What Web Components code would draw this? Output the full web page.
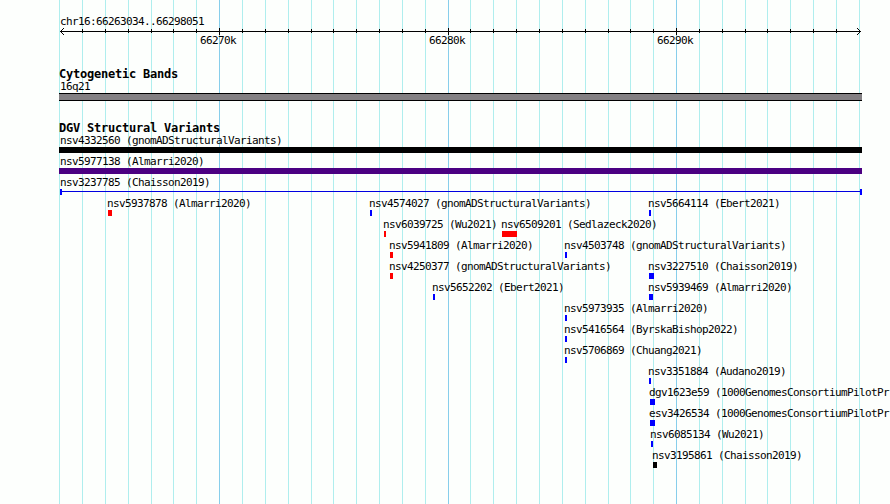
<!DOCTYPE html>
<html lang="en">
<head>
<meta charset="utf-8">
<title>chr16:66263034..66298051</title>
<style>
body {
  margin: 0;
  background: #fdfffd;
  overflow: hidden;
}
</style>
</head>
<body>
<genome-browser>
  <scale-bar region="chr16:66263034..66298051"></scale-bar>
  <genome-track class="bands" name="Cytogenetic Bands"></genome-track>
  <genome-track class="variants" name="DGV Structural Variants"></genome-track>
</genome-browser>

<script>
// Major grid lines and the label under each of them
const MAJOR = { 219: '66270k', 448: '66280k', 676: '66290k' }
const GRID = [59, 82, 105, 128, 151, 173, 196, 219, 242, 265, 288, 311, 333, 356, 379, 402, 425, 448,
  470, 493, 516, 539, 562, 585, 608, 630, 653, 676, 699, 722, 745, 767, 790, 813, 836, 859]

class GenomeBrowser extends HTMLElement {
  constructor () {
    super()
    this.attachShadow({ mode: 'open' })
    const lines = GRID.map(x => `<rect x="${x}" y="0" width="1" height="504" fill="${MAJOR[x] ? '#87ceeb' : '#afeeee'}"/>`)
    this.shadowRoot.innerHTML = `
    <style>
    :host {
      display: block;
      position: relative;
      width: 890px;
      height: 504px;
      overflow: hidden;
      color: #000;
      font: 11px/14px "DejaVu Sans Mono", monospace;
      letter-spacing: -0.622px;
      white-space: nowrap;
    }
    svg {
      position: absolute;
      inset: 0;
    }
    .tracks {
      position: relative;
      display: flex;
      flex-direction: column;
      padding-top: 15px;
    }
    </style>
    <svg width="890" height="504" shape-rendering="crispEdges">${lines.join('')}</svg>
    <div class="tracks"><slot></slot></div>`
  }
}

class ScaleBar extends HTMLElement {
  connectedCallback () {
    this.attachShadow({ mode: 'open' })
    const ticks = GRID.slice(1, -1).map(x => MAJOR[x]
      ? `<rect x="${x}" y="0" width="1" height="7"/>`
      : `<rect x="${x}" y="1" width="1" height="4"/>`)
    const labels = Object.keys(MAJOR).map(x => `<span style="margin-left:${x - 19}px">${MAJOR[x]}</span>`)
    this.shadowRoot.innerHTML = `
    <style>
    :host {
      display: block;
      height: 53px;
    }
    .region {
      height: 13px;
      padding-left: 60px;
    }
    svg {
      display: block;
    }
    .labels {
      display: grid;
      margin-top: -1px;
    }
    .labels span {
      grid-area: 1 / 1;
    }
    </style>
    <div class="region">${this.getAttribute('region')}</div>
    <svg width="890" height="7" shape-rendering="crispEdges">
      <rect x="60" y="3" width="801" height="1"/>
      ${ticks.join('')}
      <path d="M61 2h1v1h-1zM62 1h1v1h-1zM63 0h1v1h-1zM61 4h1v1h-1zM62 5h1v1h-1zM63 6h1v1h-1z"/>
      <path d="M859 2h1v1h-1zM858 1h1v1h-1zM857 0h1v1h-1zM859 4h1v1h-1zM858 5h1v1h-1zM857 6h1v1h-1z"/>
    </svg>
    <div class="labels">${labels.join('')}</div>`
  }
}

class GenomeTrack extends HTMLElement {
  connectedCallback () {
    this.attachShadow({ mode: 'open' })
    this.shadowRoot.innerHTML = `
    <style>
    :host {
      display: block;
    }
    :host(.bands) {
      height: 54px;
    }
    h2 {
      margin: 0 0 0 59px;
      height: 12px;
      font: bold 12px/13px "DejaVu Sans Mono", monospace;
      letter-spacing: -0.224px;
    }
    </style>
    <h2>${this.getAttribute('name')}</h2>
    <slot></slot>`
  }

  /**
   * Adds one line of features under the ones already there.
   * @param {Array} features - [name, start, width, kind, label start]
   */
  addRow (features) {
    const row = document.createElement('feature-row')
    features.forEach(([name, x, width, kind, label]) => {
      const feature = document.createElement('track-feature')
      feature.textContent = name
      feature.className = kind
      feature.style.setProperty('--x', x + 'px')
      feature.style.setProperty('--w', width + 'px')
      feature.style.setProperty('--label', (label || x - 1) + 'px')
      row.appendChild(feature)
    })
    this.appendChild(row)
  }
}

class FeatureRow extends HTMLElement {
  constructor () {
    super()
    this.attachShadow({ mode: 'open' })
    this.shadowRoot.innerHTML = `
    <style>
    :host {
      display: grid;
      height: 21px;
    }
    ::slotted(*) {
      grid-area: 1 / 1;
    }
    </style>
    <slot></slot>`
  }
}

class TrackFeature extends HTMLElement {
  constructor () {
    super()
    this.attachShadow({ mode: 'open' })
    this.shadowRoot.innerHTML = `
    <style>
    :host {
      display: block;
      min-width: 0;
    }
    .label {
      height: 13px;
      padding-left: var(--label);
    }
    .bar {
      box-sizing: border-box;
      width: var(--w);
      height: 6px;
      margin-left: var(--x);
      background: #00f;
    }
    :host(.loss) .bar { background: #f00; }
    :host(.complex) .bar { background: #000; }
    :host(.indigo) .bar { background: #4b0082; }
    :host(.band) .bar {
      height: 8px;
      background: #838083;
      border: solid #000;
      border-width: 1px 0;
    }
    /* thin line closed by a block at both ends */
    :host(.span) .bar {
      border: solid #00f;
      border-width: 0 2px;
      background: linear-gradient(#0000e0, #0000e0) 0 2px / 100% 1px no-repeat;
    }
    </style>
    <div class="label"><slot></slot></div>
    <div class="bar"></div>`
  }
}

window.customElements.define('genome-browser', GenomeBrowser)
window.customElements.define('scale-bar', ScaleBar)
window.customElements.define('genome-track', GenomeTrack)
window.customElements.define('feature-row', FeatureRow)
window.customElements.define('track-feature', TrackFeature)

const bands = document.querySelector('.bands')
bands.addRow([['16q21', 59, 803, 'band', 60]])

const variants = document.querySelector('.variants')
const rows = [
  [['nsv4332560 (gnomADStructuralVariants)', 59, 803, 'complex', 60]],
  [['nsv5977138 (Almarri2020)', 59, 803, 'indigo', 60]],
  [['nsv3237785 (Chaisson2019)', 60, 802, 'span', 60]],
  [
    ['nsv5937878 (Almarri2020)', 108, 4, 'loss'],
    ['nsv4574027 (gnomADStructuralVariants)', 370, 2, 'gain'],
    ['nsv5664114 (Ebert2021)', 649, 2, 'gain']
  ],
  [
    ['nsv6039725 (Wu2021)', 384, 2, 'loss'],
    ['nsv6509201 (Sedlazeck2020)', 502, 15, 'loss']
  ],
  [
    ['nsv5941809 (Almarri2020)', 390, 3, 'loss'],
    ['nsv4503748 (gnomADStructuralVariants)', 565, 2, 'gain']
  ],
  [
    ['nsv4250377 (gnomADStructuralVariants)', 390, 3, 'loss'],
    ['nsv3227510 (Chaisson2019)', 649, 5, 'gain']
  ],
  [
    ['nsv5652202 (Ebert2021)', 433, 2, 'gain'],
    ['nsv5939469 (Almarri2020)', 649, 4, 'gain']
  ],
  [['nsv5973935 (Almarri2020)', 565, 2, 'gain']],
  [['nsv5416564 (ByrskaBishop2022)', 565, 2, 'gain']],
  [['nsv5706869 (Chuang2021)', 565, 2, 'gain']],
  [['nsv3351884 (Audano2019)', 649, 2, 'gain']],
  [['dgv1623e59 (1000GenomesConsortiumPilotPr', 650, 5, 'gain']],
  [['esv3426534 (1000GenomesConsortiumPilotPr', 650, 5, 'gain']],
  [['nsv6085134 (Wu2021)', 651, 2, 'gain']],
  [['nsv3195861 (Chaisson2019)', 653, 4, 'complex']]
]
rows.forEach(row => variants.addRow(row))
</script>
</body>
</html>
